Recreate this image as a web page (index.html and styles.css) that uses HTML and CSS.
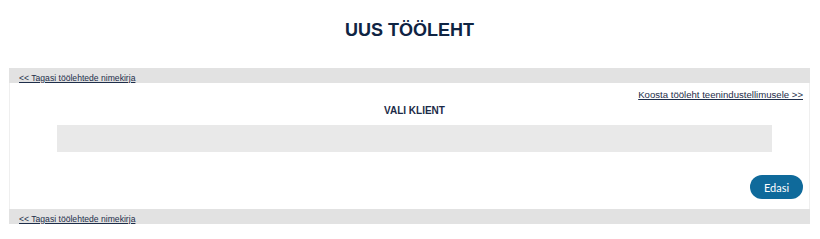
FILE: index.html
```html
<!DOCTYPE html>
<html lang="et">
<head>
    <meta charset="UTF-8">
    <meta name="viewport" content="width=device-width, initial-scale=1.0">
    <title>Uus tööleht</title>
    <link rel="stylesheet" href="styles.css">
</head>
<body>
    <div class="page">
        <h1 class="page-title">UUS TÖÖLEHT</h1>

        <div class="nav-bar">
            <a href="#" class="nav-link">&lt;&lt; Tagasi töölehtede nimekirja</a>
        </div>

        <div class="panel">
            <div class="panel-top">
                <a href="#" class="order-link">Koosta tööleht teenindustellimusele &gt;&gt;</a>
            </div>
            <h2 class="section-title">VALI KLIENT</h2>
            <div class="client-box"></div>
            <div class="panel-actions">
                <button class="btn-next">Edasi</button>
            </div>
        </div>

        <div class="nav-bar">
            <a href="#" class="nav-link">&lt;&lt; Tagasi töölehtede nimekirja</a>
        </div>
    </div>
</body>
</html>
```

FILE: styles.css
```css
* {
    margin: 0;
    padding: 0;
    box-sizing: border-box;
}

body {
    font-family: 'Liberation Sans', Arial, sans-serif;
    background: #fff;
    color: #1b2a47;
}

.page {
    padding: 0 10px 0 9px;
}

.page-title {
    font-size: 18px;
    font-weight: bold;
    color: #0f2443;
    text-align: center;
    height: 68px;
    padding-top: 19px;
    line-height: 22px;
}

.nav-bar {
    background: #e2e2e2;
    height: 15px;
    padding-left: 10px;
    line-height: 15px;
}

.nav-link {
    font-size: 8.6px;
    color: #1e2e4a;
}

.panel {
    border: 1px solid #efefef;
    border-top: none;
    border-bottom: none;
    height: 126px;
    padding: 0 6px 0 47px;
}

.panel-top {
    text-align: right;
    padding-top: 4px;
    height: 17px;
    line-height: 12px;
}

.order-link {
    font-size: 9.6px;
    color: #1e2e4a;
}

.section-title {
    font-size: 10px;
    font-weight: bold;
    color: #1b2a47;
    text-align: center;
    line-height: 12px;
    height: 25px;
    padding-top: 5px;
    margin-right: 31px;
}

.client-box {
    background: #e9e9e9;
    height: 27px;
    margin-right: 31px;
}

.panel-actions {
    display: flex;
    justify-content: flex-end;
    padding-top: 23px;
}

.btn-next {
    background: #0f6a9b;
    color: #fff;
    border: none;
    border-radius: 12px;
    width: 53px;
    height: 24px;
    font-family: 'Lato', sans-serif;
    font-size: 11px;
    cursor: pointer;
}
```
